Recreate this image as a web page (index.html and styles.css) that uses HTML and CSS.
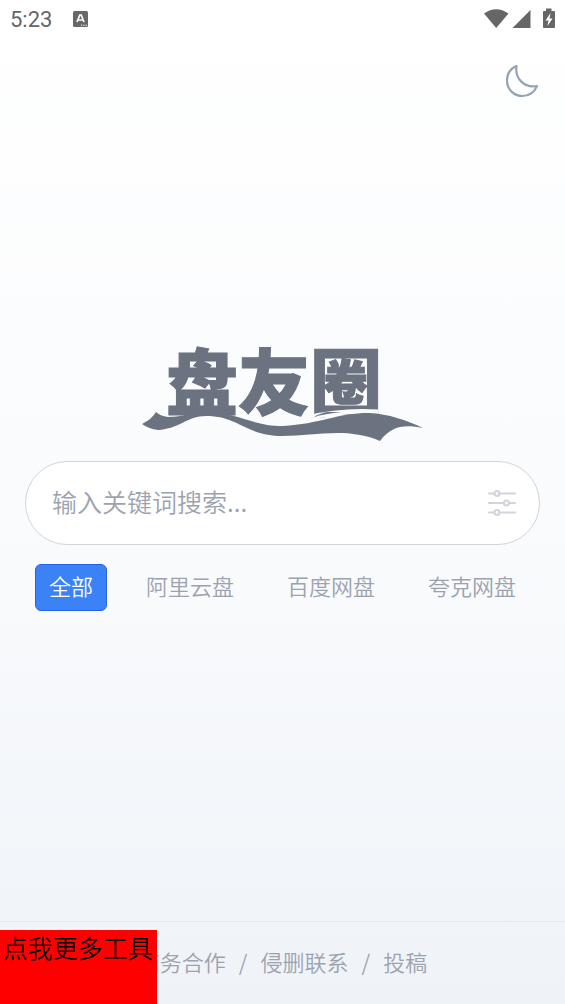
FILE: index.html
```html
<!DOCTYPE html>
<html lang="zh-CN">
<head>
<meta charset="utf-8">
<meta name="viewport" content="width=device-width, initial-scale=1">
<title>盘友圈</title>
<link rel="stylesheet" href="styles.css">
</head>
<body>
<div class="status">
  <span class="time">5:23</span>
  <svg class="status-app" width="16" height="18" viewBox="0 0 16 18" aria-hidden="true">
    <rect x="1" y="1" width="15" height="16" rx="1.500" fill="#686868"/>
    <path d="M5 12 7.800 5h1.400L12 12M6.300 10h4.400" fill="none" stroke="#fff" stroke-width="1.700"/>
    <path d="M9 15.200h1.200M11.300 15.200h1.200M13.600 15.200h1.200" stroke="#fff" stroke-width="1"/>
  </svg>
  <svg class="status-icons" width="72" height="22" viewBox="0 0 72 22" aria-hidden="true" fill="#666">
    <path d="M0 5.500Q12 -3 24.500 5.500L12.200 20Z"/>
    <path d="M46.500 2v18H28.500Z"/>
    <path d="M62 3V.500h5.500V3h2.500q1 0 1 1v15q0 1-1 1H60q-1 0-1-1V4q0-1 1-1Z"/>
    <path d="M66.500 5 61.500 12.500h3l-1 5.500 5-7.500h-3Z" fill="#fff"/>
  </svg>
</div>
<header class="header">
  <button class="theme" type="button" aria-label="深色模式">
    <svg width="34" height="34" viewBox="0 0 34 34" fill="none" stroke="#94a3b8" stroke-width="2.200" stroke-linejoin="round" aria-hidden="true">
      <path d="M11.500 2C5.500 4.500 2 10 2 16.500 2 25.500 9 32 17.500 32 24 32 29.500 28 32 22 19.500 24.500 9.500 14.500 11.500 2Z"/>
    </svg>
  </button>
</header>
<main class="main">
  <svg class="logo" width="282" height="98" viewBox="142 345 282 98" role="img" aria-label="盘友圈">
    <text class="logo-text" x="274" y="409" text-anchor="middle">盘友圈</text>
    <path class="wave-gap" d="M238 416C260 424 284 425 308 418C335 411 360 411 378 412"/>
    <path d="M142 424Q152 419 156 412Q160 416 168 417C184 417 190 412 208 412C239 413 252 426 283 426C320 424 337 413 369 413C389 414 406 420 423 428C404 424 391 426 380 441C345 426 311 437 278 436C244 434 238 416 206 416C187 416 179 429 158 430Q149 429 142 424Z"/>
    <path d="M313 417Q324 412 328 412H342Q325 414 313 417Z"/>
  </svg>
  <form class="search">
    <input class="search-input" type="text" placeholder="输入关键词搜索..." aria-label="搜索">
    <button class="filter" type="button" aria-label="筛选">
      <svg width="30" height="28" viewBox="0 0 30 28" fill="none" stroke="#d1d5db" stroke-width="2.200" stroke-linecap="round" aria-hidden="true">
        <path d="M2 4.500h5M13 4.500h15M2 14h15M23 14h5M2 23.500h5M13 23.500h15"/>
        <circle cx="10" cy="4.500" r="2.500"/><circle cx="19.500" cy="14" r="2.500"/><circle cx="10" cy="23.500" r="2.500"/>
      </svg>
    </button>
  </form>
  <nav class="tabs">
    <button class="tab tab-active" type="button">全部</button>
    <button class="tab" type="button">阿里云盘</button>
    <button class="tab" type="button">百度网盘</button>
    <button class="tab" type="button">夸克网盘</button>
  </nav>
</main>
<footer class="footer">
  <a class="link" href="#">商务合作</a>
  <span class="slash">/</span>
  <a class="link" href="#">侵删联系</a>
  <span class="slash">/</span>
  <a class="link" href="#">投稿</a>
</footer>
<button class="more" type="button">点我更多工具</button>
</body>
</html>
```

FILE: styles.css
```css
* {
  box-sizing: border-box;
}

body {
  margin: 0;
  min-height: 100vh;
  display: flex;
  flex-direction: column;
  background: linear-gradient(#fff, #f8fafc 60%, #eff3f8);
  font-family: "Noto Sans CJK SC", sans-serif;
  font-size: 22px;
  font-weight: 350;
  color: #9ca3af;
}

button,
input {
  font: inherit;
  color: inherit;
  border: 0;
  padding: 0;
  background: none;
}

svg {
  display: block;
}

.status {
  display: flex;
  align-items: center;
  height: 38px;
  padding: 0 10px;
}

.time {
  font-family: Roboto, sans-serif;
  font-weight: 400;
  color: #666;
}

.status-app {
  margin-left: 20px;
}

.status-icons {
  margin-left: auto;
  margin-right: -1px;
}

.header {
  display: flex;
  justify-content: flex-end;
  align-items: center;
  height: 86px;
  padding: 0 26px;
}

.main {
  flex: 1;
  display: flex;
  flex-direction: column;
  justify-content: center;
  padding: 0 25px 90px;
}

.logo {
  align-self: center;
  overflow: visible;
  fill: #6b7280;
}

.logo-text {
  font-size: 72px;
  font-weight: 900;
  line-height: 1;
  stroke: #6b7280;
  stroke-width: 1px;
}

.wave-gap {
  fill: none;
  stroke: #fafbfd;
  stroke-width: 5px;
}

.search {
  display: flex;
  align-items: center;
  height: 84px;
  margin-top: 18px;
  padding: 0 22px 0 26px;
  border: 1px solid #d1d5db;
  border-radius: 42px;
  background: #fff;
}

.search-input {
  flex: 1;
  min-width: 0;
  padding-bottom: 4px;
  font-size: 25px;
  outline: 0;
}

.search-input::placeholder {
  color: #9ca3af;
  opacity: 1;
}

.tabs {
  display: flex;
  justify-content: space-between;
  margin-top: 19px;
  padding: 0 10px;
}

.tab {
  height: 47px;
  padding: 0 13px 4px;
  border: 1px solid transparent;
  border-radius: 6px;
}

.tab-active {
  color: #fff;
  background: #3b82f6;
  border-color: #2563eb;
}

.footer {
  display: flex;
  justify-content: center;
  align-items: center;
  gap: 13px;
  height: 83px;
  padding-bottom: 4px;
  border-top: 1px solid #e2e8f0;
}

.link {
  color: inherit;
  text-decoration: none;
}

.more {
  position: fixed;
  left: 0;
  bottom: 0;
  display: flex;
  align-items: flex-start;
  height: 74px;
  padding: 0 4px 0 3px;
  background: #f00;
  color: #000;
  font-size: 25px;
  line-height: 34px;
}
```
